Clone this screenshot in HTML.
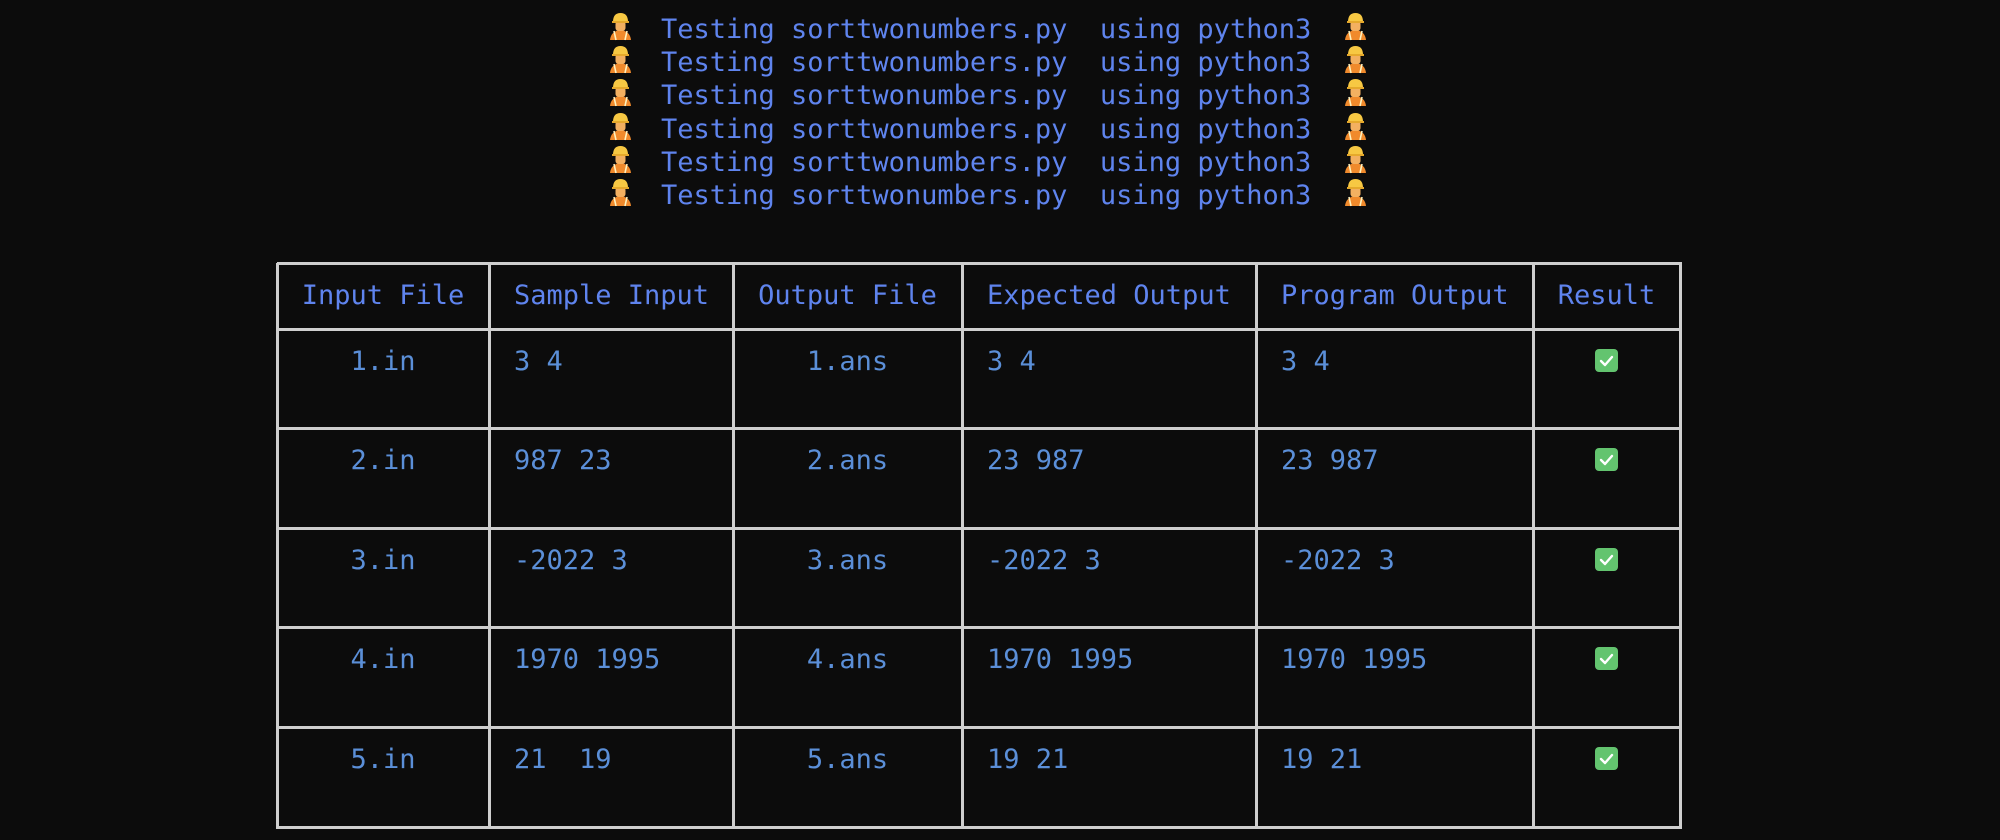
<!DOCTYPE html>
<html><head><meta charset="utf-8"><style>
html,body{margin:0;padding:0;background:#0c0c0c;width:2000px;height:840px;overflow:hidden;position:relative}
.t{position:absolute;font-family:"DejaVu Sans Mono","Liberation Mono",monospace;font-size:27px;line-height:33px;white-space:pre;}
.h{color:#5f84ee}
.b{color:#5b8fd8}
.v{position:absolute;background:#cfcfcf;width:3px;top:263px;height:566px}
.r{position:absolute;background:#cfcfcf;height:3px;left:277px;width:1405px}
.c{text-align:center}
.e{position:absolute}
.ck{position:absolute;width:23px;height:23px;border-radius:4px;background:#63c46f}
</style></head><body>
<svg width="0" height="0" style="position:absolute"><defs>
<g id="w">
<path d="M1 28 Q2 19 11.5 18 Q21 19 22 28 Z" fill="#f08a2c"/>
<path d="M5 19 L7 28 M18 19 L16 28" stroke="#fff3c0" stroke-width="1.6"/>
<rect x="6.5" y="9" width="10" height="10" rx="3" fill="#f3b061"/>
<path d="M4 10 Q4 1 11.5 1 Q19 1 19 10 Z" fill="#f7c843"/>
<rect x="3" y="9" width="17" height="2" fill="#e6a92c"/>
</g></defs></svg>

<div id="lines"></div>
<script>
var out='';
for(var i=0;i<6;i++){var y=12+i*33.2;
out+='<svg class="e" style="left:609px;top:'+(y)+'px" width="23" height="29"><use href="#w"/></svg>';
out+='<svg class="e" style="left:1344px;top:'+(y)+'px" width="23" height="29"><use href="#w"/></svg>';
out+='<div class="t h" style="left:661px;top:'+(y+1)+'px">Testing sorttwonumbers.py  using python3</div>';}
var cols=[277,489,733,962,1256,1533,1680];
var rows=[263,329,428,528,627,727,827];
cols.forEach(function(x){out+='<div class="v" style="left:'+(x-1)+'px"></div>';});
rows.forEach(function(y){out+='<div class="r" style="top:'+(y-1)+'px"></div>';});
var hd=['Input File','Sample Input','Output File','Expected Output','Program Output','Result'];
var al=[1,0,1,0,0,1];
function cell(ci,y,txt,cls){
 if(al[ci]) out+='<div class="t c '+cls+'" style="left:'+cols[ci]+'px;width:'+(cols[ci+1]-cols[ci])+'px;top:'+y+'px">'+txt+'</div>';
 else out+='<div class="t '+cls+'" style="left:'+(cols[ci]+25)+'px;top:'+y+'px">'+txt+'</div>';}
hd.forEach(function(h,i){cell(i,279,h,'h');});
var data=[['1.in','3 4','1.ans','3 4','3 4'],['2.in','987 23','2.ans','23 987','23 987'],['3.in','-2022 3','3.ans','-2022 3','-2022 3'],['4.in','1970 1995','4.ans','1970 1995','1970 1995'],['5.in','21  19','5.ans','19 21','19 21']];
data.forEach(function(d,r){var y=rows[r+1]+16;
 d.forEach(function(t,i){cell(i,y,t,'b');});
 out+='<div class="ck" style="left:1595px;top:'+(rows[r+1]+20)+'px"><svg width="23" height="23"><path d="M6 12 L10 16 L17 8" stroke="#fff" stroke-width="2.4" fill="none" stroke-linecap="round" stroke-linejoin="round"/></svg></div>';
});
document.getElementById('lines').innerHTML=out;
</script>
</body></html>
